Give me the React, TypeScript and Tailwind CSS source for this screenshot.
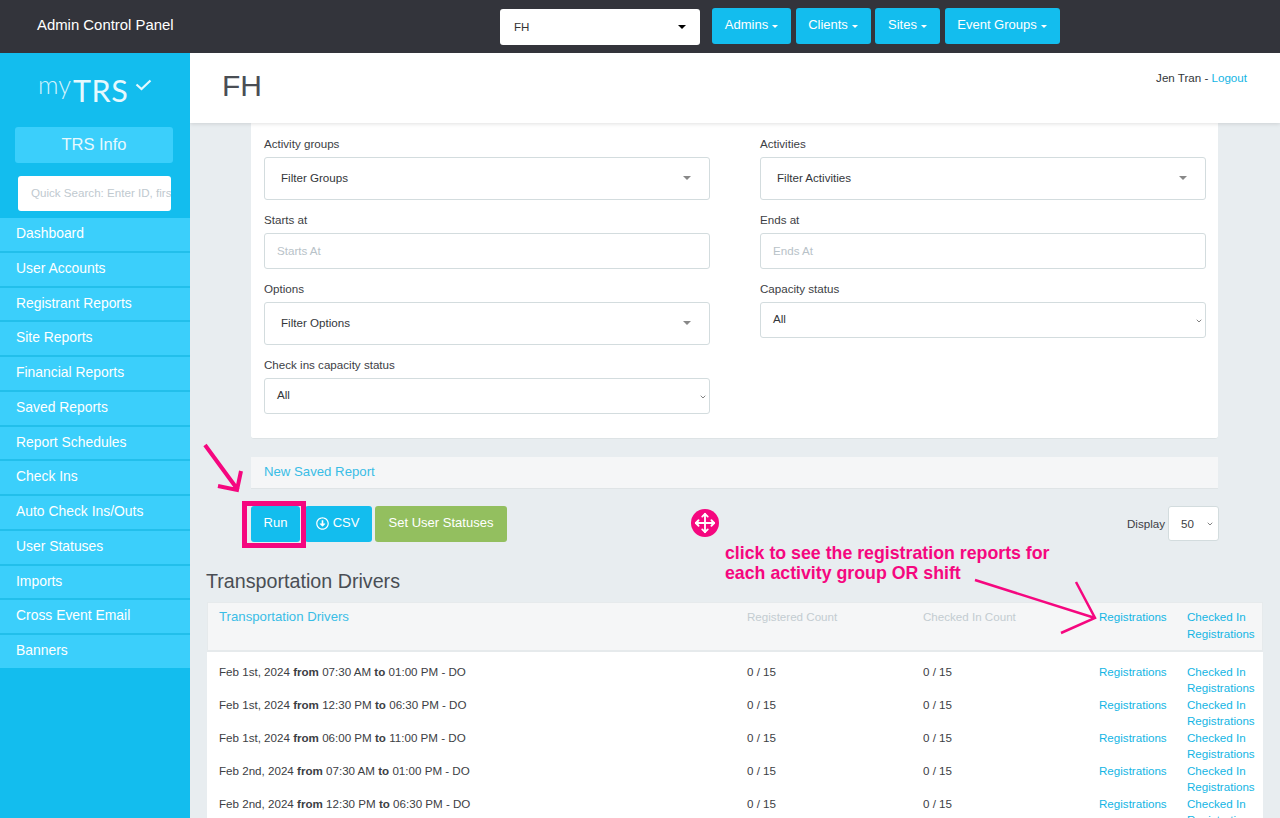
import { ChevronDown, Move } from "lucide-react";
import { FaRegArrowAltCircleDown } from "react-icons/fa";

const MENU = [
  "Dashboard",
  "User Accounts",
  "Registrant Reports",
  "Site Reports",
  "Financial Reports",
  "Saved Reports",
  "Report Schedules",
  "Check Ins",
  "Auto Check Ins/Outs",
  "User Statuses",
  "Imports",
  "Cross Event Email",
];

const ROWS = [
  ["Feb 1st, 2024", "07:30 AM", "01:00 PM"],
  ["Feb 1st, 2024", "12:30 PM", "06:30 PM"],
  ["Feb 1st, 2024", "06:00 PM", "11:00 PM"],
  ["Feb 2nd, 2024", "07:30 AM", "01:00 PM"],
  ["Feb 2nd, 2024", "12:30 PM", "06:30 PM"],
];

function Caret({ className }: { className: string }) {
  return <span className={`inline-block h-0 w-0 border-x-[3px] border-t-[3px] border-x-transparent ${className}`} />;
}

function Field({ label, children }: { label: string; children: React.ReactNode }) {
  return (
    <div className="pb-[13px]">
      <div className="mb-[6px] text-[11.6px] leading-[14px] text-[#3c4044]">{label}</div>
      {children}
    </div>
  );
}

function FilterSelect({ text }: { text: string }) {
  return (
    <div className="flex h-[43px] items-center justify-between rounded-[3px] border border-[#d3dcde] bg-white pb-[2px] pl-4 pr-[18px] text-[11.6px] text-[#33363a]">
      {text}
      <Caret className="border-x-[4px] border-t-[4px] border-t-[#888]" />
    </div>
  );
}

function NativeSelect({ text }: { text: string }) {
  return (
    <div className="flex h-[36px] items-center justify-between rounded-[3px] border border-[#d3dcde] bg-white pb-[2px] pl-3 pr-[2px] text-[11.6px] text-[#33363a]">
      {text}
      <ChevronDown className="mt-[3px] h-2 w-2 text-[#444]" strokeWidth={2} />
    </div>
  );
}

function TextInput({ placeholder }: { placeholder: string }) {
  return (
    <div className="flex h-[36px] items-center rounded-[3px] border border-[#d3dcde] bg-white pb-[1px] pl-3 text-[11.6px] text-[#b8c2c8]">
      {placeholder}
    </div>
  );
}

function NavButton({ label, width }: { label: string; width: string }) {
  return (
    <div className={`flex h-9 items-center justify-center gap-[4px] rounded-[3px] bg-[#13bdee] pb-[2px] text-[13px] text-white ${width}`}>
      {label}
      <Caret className="mt-[3px] border-t-white" />
    </div>
  );
}

function Sidebar() {
  return (
    <aside className="w-[190px] shrink-0 bg-[#13bdee] text-white">
      <div className="flex h-[74px] items-start pl-[38px] pt-[16px] font-['Lato',sans-serif]">
        <span className="text-[25.5px] font-light leading-[30px] text-[#d0f3fd]">my</span>
        <span className="ml-[2px] mt-[3px] text-[30.5px] leading-[36px] tracking-[0.5px] text-[#e6f9fe]">TRS</span>
        <svg className="ml-[7px] mt-[10px]" width="17" height="12" viewBox="0 0 17 12" fill="none">
          <path d="M1.5 5.5 L6.5 10 L15.5 1.5" stroke="#e4f8fe" strokeWidth="2.2" />
        </svg>
      </div>
      <div className="ml-[15px] flex h-9 w-[158px] items-center justify-center rounded-[3px] bg-[#3bcffb] pb-[2px] text-[16.5px] text-[#e8f9fe]">
        TRS Info
      </div>
      <div className="ml-[18px] mt-[13px] flex h-[35px] w-[153px] items-center overflow-hidden whitespace-nowrap rounded-[3px] bg-white pb-[2px] pl-[13px] text-[11.6px] text-[#c0c9cf]">
        Quick Search: Enter ID, first name
      </div>
      <nav className="mt-[7px]">
        {MENU.map((item) => (
          <div key={item} className="h-[34.75px] border-b-2 border-[#22bfeb] bg-[#3bcffb] pl-4 pt-[7px] text-[13.9px] leading-[17px]">
            {item}
          </div>
        ))}
        <div className="h-[32.5px] bg-[#3bcffb] pl-4 pt-[7px] text-[13.9px] leading-[17px]">Banners</div>
      </nav>
    </aside>
  );
}

function ActionButtons() {
  return (
    <div className="ml-[61px] mr-[61px] mt-[17px] flex items-start justify-between">
      <div className="flex text-[13px] text-white">
        <div className="relative flex h-9 w-[49px] items-center justify-center rounded-[3px] bg-[#13bdee] pb-[2px]">
          Run
          <div className="absolute -bottom-[6px] -left-[9px] -right-[6px] -top-[5px] border-[5px] border-[#f5077f]" />
        </div>
        <div className="ml-[5px] flex h-9 w-[67px] items-center justify-center gap-[4px] rounded-[3px] bg-[#13bdee] pb-[2px] pr-[2px]">
          <FaRegArrowAltCircleDown className="h-[13px] w-[13px]" />
          CSV
        </div>
        <div className="ml-[3px] flex h-9 w-[132px] items-center justify-center rounded-[3px] bg-[#93bf5f] pb-[2px]">
          Set User Statuses
        </div>
      </div>
      <div className="flex items-center text-[11.6px] text-[#3c4044]">
        <span className="mr-[3px]">Display</span>
        <div className="flex h-[35px] w-[51px] items-center justify-between rounded-[3px] border border-[#d3dcde] bg-white pl-3 pr-[4px]">
          50
          <ChevronDown className="h-2 w-2 text-[#444]" strokeWidth={2} />
        </div>
      </div>
    </div>
  );
}

function DriversTable() {
  return (
    <div className="mx-[17px] mt-[7px] bg-white text-[11.6px]">
      <div className="grid h-[50px] grid-cols-[539px_176px_176px_88px_1fr] border border-b-2 border-[#e6eaec] bg-[#f5f6f7] pt-[5px] leading-[17px]">
        <div className="pl-[11px] text-[13.2px] text-[#39bde6]">Transportation Drivers</div>
        <div className="text-[#c3ccd1]">Registered Count</div>
        <div className="text-[#c3ccd1]">Checked In Count</div>
        <div className="text-[#13b5e4]">Registrations</div>
        <div className="text-[#13b5e4]">
          Checked In
          <br />
          Registrations
        </div>
      </div>
      <div className="pt-[12px]">
        {ROWS.map(([day, from, to], i) => (
          <div key={i} className="mb-px grid grid-cols-[540px_176px_176px_88px_1fr] leading-4">
            <div className="pl-3 text-[#3c4044]">
              {day} <b>from</b> {from} <b>to</b> {to} - DO
            </div>
            <div className="text-[#3c4044]">0 / 15</div>
            <div className="text-[#3c4044]">0 / 15</div>
            <div className="text-[#13b5e4]">Registrations</div>
            <div className="text-[#13b5e4]">
              Checked In
              <br />
              Registrations
            </div>
          </div>
        ))}
      </div>
    </div>
  );
}

export default function App() {
  return (
    <div className="relative h-[818px] w-[1280px] overflow-hidden bg-[#e8edf0] font-['Liberation_Sans',sans-serif]">
      <header className="flex h-[53px] items-start bg-[#33343b]">
        <div className="w-[500px] pl-[37px] pt-[17px] text-[14.9px] leading-[17px] text-white">Admin Control Panel</div>
        <div className="mt-[9px] flex h-9 w-[200px] items-center justify-between rounded-[3px] bg-white px-[14px] text-[11.6px] text-[#333]">
          FH
          <Caret className="border-x-[4px] border-t-[4px] border-t-black" />
        </div>
        <div className="ml-3 mt-2 flex gap-[4.5px]">
          <NavButton label="Admins" width="w-[79px]" />
          <NavButton label="Clients" width="w-[75px]" />
          <NavButton label="Sites" width="w-[65px]" />
          <NavButton label="Event Groups" width="w-[115px]" />
        </div>
      </header>

      <div className="flex h-[765px]">
        <Sidebar />
        <main className="min-w-0 flex-1 overflow-hidden">
          <div className="relative z-10 flex h-[70px] items-start justify-between bg-white pl-8 pr-[33px] shadow-[0_1px_4px_rgba(0,0,0,0.12)]">
            <h1 className="pt-[15px] text-[30px] leading-[36px] text-[#4a4e54]">FH</h1>
            <div className="pt-4 text-[11.6px] text-[#33363a]">
              Jen Tran - <span className="text-[#13b5e4]">Logout</span>
            </div>
          </div>

          <section className="ml-[61px] mr-[62px] rounded-b-[3px] border-b border-[#dde3e5] bg-white pb-[11px] pl-[13px] pr-[12px] pt-[14px]">
            <div className="grid grid-cols-2 gap-x-[50px]">
              <Field label="Activity groups">
                <FilterSelect text="Filter Groups" />
              </Field>
              <Field label="Activities">
                <FilterSelect text="Filter Activities" />
              </Field>
              <Field label="Starts at">
                <TextInput placeholder="Starts At" />
              </Field>
              <Field label="Ends at">
                <TextInput placeholder="Ends At" />
              </Field>
              <Field label="Options">
                <FilterSelect text="Filter Options" />
              </Field>
              <Field label="Capacity status">
                <NativeSelect text="All" />
              </Field>
              <Field label="Check ins capacity status">
                <NativeSelect text="All" />
              </Field>
            </div>
          </section>

          <div className="ml-[61px] mr-[62px] mt-[18px] flex h-[32px] items-center border-b border-[#dfe4e6] bg-[#f5f6f7] pb-[2px] pl-[13px] text-[13.2px] text-[#39bde6]">
            New Saved Report
          </div>

          <ActionButtons />

          <h2 className="ml-4 mt-[25px] text-[19.7px] leading-[28px] text-[#4a4e54]">Transportation Drivers</h2>
          <DriversTable />
        </main>
      </div>

      {/* annotations drawn on top of the screenshot */}
      <svg className="pointer-events-none absolute inset-0" width="1280" height="818" fill="none" stroke="#f5077f" strokeWidth="4">
        <path d="M205 445 L238 490 M241 471 L237 490 L218 486" />
        <path d="M975 580 L1095 618 M1076 582 L1095 618 L1061 633" strokeWidth="2.5" />
      </svg>
      <div className="absolute left-[691px] top-[509px] flex h-7 w-7 items-center justify-center rounded-full bg-[#f5077f]">
        <Move className="h-[22px] w-[22px] text-white" strokeWidth={2} />
      </div>
      <div className="absolute left-[725px] top-[543px] text-[17.75px] font-bold leading-[20px] text-[#f5077f]">
        click to see the registration reports for
        <br />
        each activity group OR shift
      </div>
    </div>
  );
}
